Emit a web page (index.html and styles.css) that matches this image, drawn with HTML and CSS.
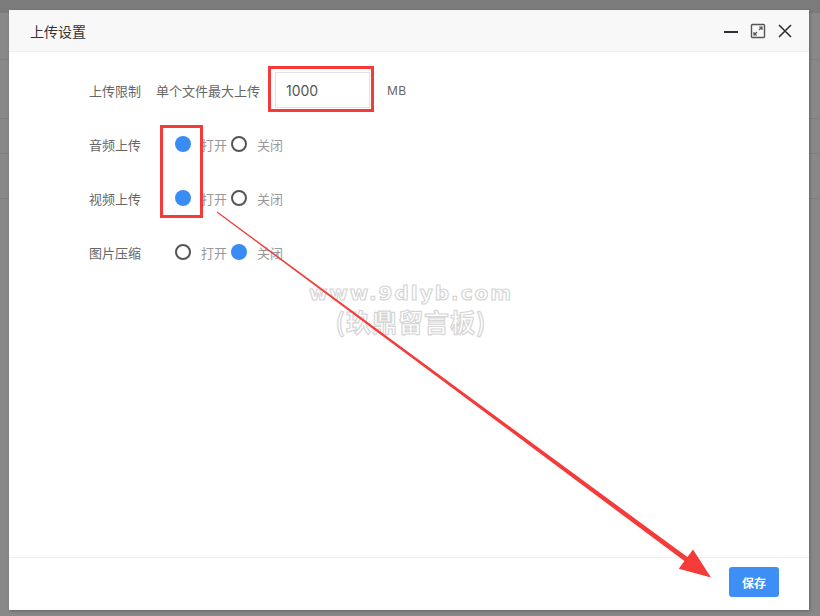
FILE: index.html
```html
<!DOCTYPE html>
<html>
<head>
<meta charset="utf-8">
<title>上传设置</title>
<link rel="stylesheet" href="styles.css">
</head>
<body>
	<div class="page">
		<div class="page-top"></div>
		<div class="page-row r1"></div>
		<div class="page-row r2"></div>
		<div class="page-row r3"></div>
		<div class="page-row r4"></div>
	</div>

	<div class="layer">
		<div class="layer-title">
			<span>上传设置</span>
			<div class="layer-tools">
				<svg class="ico" width="16" height="16" viewBox="0 0 16 16"><rect x="1" y="8" width="14" height="2" fill="#2e2e38"/></svg>
				<svg class="ico" width="16" height="16" viewBox="0 0 16 16">
					<rect x="1.5" y="1.5" width="13" height="13" rx="1" fill="none" stroke="#555" stroke-width="1.4"/>
					<path d="M9 4h3v3M12 4L9 7M7 12H4V9M4 12l3-3" fill="none" stroke="#555" stroke-width="1.2"/>
				</svg>
				<svg class="ico" width="16" height="16" viewBox="0 0 16 16"><path d="M2 2l12 12M14 2L2 14" stroke="#2e2e38" stroke-width="1.6"/></svg>
			</div>
		</div>

		<div class="layer-body">
			<div class="form-item">
				<label class="form-label">上传限制</label>
				<div class="form-block">
					<span class="txt">单个文件最大上传</span>
					<input class="form-input" type="text" value="1000">
					<span class="txt unit">MB</span>
				</div>
			</div>
			<div class="form-item">
				<label class="form-label">音频上传</label>
				<div class="form-block radios">
					<i class="radio on"></i><span class="rtxt">打开</span>
					<i class="radio"></i><span class="rtxt">关闭</span>
				</div>
			</div>
			<div class="form-item">
				<label class="form-label">视频上传</label>
				<div class="form-block radios">
					<i class="radio on"></i><span class="rtxt">打开</span>
					<i class="radio"></i><span class="rtxt">关闭</span>
				</div>
			</div>
			<div class="form-item">
				<label class="form-label">图片压缩</label>
				<div class="form-block radios">
					<i class="radio"></i><span class="rtxt">打开</span>
					<i class="radio on"></i><span class="rtxt">关闭</span>
				</div>
			</div>
		</div>

		<div class="layer-foot">
			<button class="btn">保存</button>
		</div>
	</div>

	<!-- screenshot marks -->
	<div class="mark box1"></div>
	<div class="mark box2"></div>
	<div class="watermark">
		<div class="wm1">www.9dlyb.com</div>
		<div class="wm2">(玖鼎留言板)</div>
	</div>
	<svg class="arrow" width="820" height="616" viewBox="0 0 820 616">
		<polygon fill="#f53a3a" points="216.7,212.4 684.4,561.1 678.8,568.7 711,577.5 693,549.5 687.4,557.1 217.3,211.6"/>
	</svg>
</body>
</html>
```

FILE: styles.css
```css
* {
	box-sizing: border-box;
}
body {
	margin: 0;
	width: 820px;
	height: 616px;
	overflow: hidden;
	background: #888888;
	font-family: Inter, "Noto Sans CJK SC", sans-serif;
	font-size: 13px;
	color: #666;
	position: relative;
}

/* page behind the shade */
.page-top {
	height: 13px;
	background: #7b7b7b;
}
.page-row {
	border-bottom: 1px solid #7e7e7e;
}
.r1 { height: 47px; }
.r2 { height: 59px; }
.r3 { height: 35px; }
.r4 { height: 45px; }

/* dialog */
.layer {
	position: absolute;
	left: 9px;
	top: 10px;
	width: 800px;
	height: 600px;
	background: #fff;
	display: flex;
	flex-direction: column;
	box-shadow: 1px 1px 3px rgba(0,0,0,0.25);
}
.layer-title {
	height: 42px;
	flex: none;
	background: #f8f8f8;
	border-bottom: 1px solid #eee;
	display: flex;
	align-items: center;
	justify-content: space-between;
	padding: 0 16px 0 21px;
	font-size: 14px;
	color: #333;
}
.layer-tools {
	display: flex;
	gap: 11px;
	padding-top: 1px;
}
.ico {
	display: block;
}
.layer-body {
	flex: 1;
	padding-top: 20px;
}
.form-item {
	display: flex;
	align-items: center;
	height: 36px;
	margin-bottom: 18px;
}
.form-label {
	width: 132px;
	text-align: right;
	padding-right: 0;
}
.form-block {
	display: flex;
	align-items: center;
	margin-left: 15px;
}
.form-input {
	width: 95px;
	height: 36px;
	margin-left: 15px;
	border: 1px solid #e2e2e2;
	padding: 0 10px;
	font-family: Inter, sans-serif;
	font-size: 14px;
	color: #555;
	outline: none;
}
.unit {
	margin-left: 17px;
	font-size: 12px;
	letter-spacing: 0.5px;
}
.radios {
	padding-left: 19px;
}
.radio {
	width: 16px;
	height: 16px;
	border-radius: 50%;
	border: 2px solid #555;
	margin-right: 10px;
}
.radio.on {
	border: none;
	background: #3a8cf5;
}
.rtxt {
	color: #999;
	margin-right: 4px;
}

.layer-foot {
	height: 53px;
	flex: none;
	border-top: 1px solid #eee;
	display: flex;
	justify-content: flex-end;
	padding: 9px 30px 0 0;
}
.btn {
	width: 50px;
	height: 30px;
	border: none;
	border-radius: 3px;
	background: #3d8ff6;
	color: #fff;
	font-family: "Noto Sans CJK SC", sans-serif;
	font-size: 12px;
	font-weight: bold;
}

/* annotations */
.mark {
	position: absolute;
	border: 3px solid #f53a3a;
}
.box1 {
	left: 268px;
	top: 66px;
	width: 106px;
	height: 46px;
}
.box2 {
	left: 160px;
	top: 125px;
	width: 43px;
	height: 93px;
}
.arrow {
	position: absolute;
	left: 0;
	top: 0;
}
.watermark {
	position: absolute;
	left: 296px;
	top: 279px;
	width: 230px;
	text-align: center;
	color: #fff;
	-webkit-text-stroke: 1.2px #d6d6d6;
	font-weight: bold;
	line-height: 28px;
}
.wm1 {
	font-family: "DejaVu Sans", sans-serif;
	font-size: 20px;
	letter-spacing: 2px;
}
.wm2 {
	font-family: "Noto Sans CJK SC", sans-serif;
	font-size: 25px;
	letter-spacing: 1px;
}
```
